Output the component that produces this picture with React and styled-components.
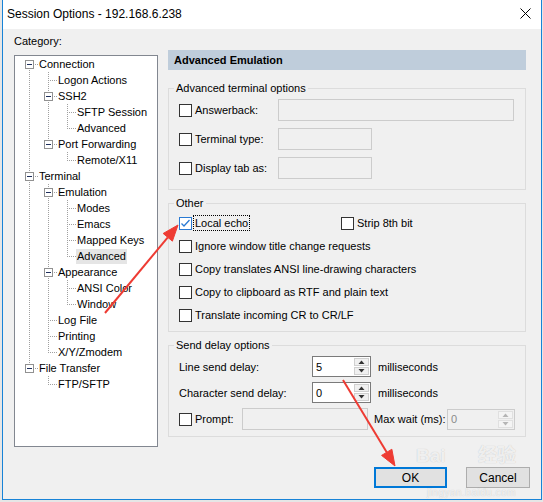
import React from "react";
import styled, { createGlobalStyle } from "styled-components";

const GlobalStyle = createGlobalStyle`
  html, body {
    margin: 0;
    background: #e6e6e6;
    font-family: "Liberation Sans", Arial, sans-serif;
    color: #000;
  }
  * { box-sizing: border-box; }
`;

const TREE = [
  {
    label: "Connection",
    children: [
      { label: "Logon Actions" },
      { label: "SSH2", children: [{ label: "SFTP Session" }, { label: "Advanced" }] },
      { label: "Port Forwarding", children: [{ label: "Remote/X11" }] },
    ],
  },
  {
    label: "Terminal",
    children: [
      {
        label: "Emulation",
        children: [
          { label: "Modes" },
          { label: "Emacs" },
          { label: "Mapped Keys" },
          { label: "Advanced", selected: true },
        ],
      },
      { label: "Appearance", children: [{ label: "ANSI Color" }, { label: "Window" }] },
      { label: "Log File" },
      { label: "Printing" },
      { label: "X/Y/Zmodem" },
    ],
  },
  { label: "File Transfer", children: [{ label: "FTP/SFTP" }] },
];

const flatten = (nodes, level = 0, guides = []) =>
  nodes.flatMap((n, i) => {
    const last = i === nodes.length - 1;
    const row = {
      label: n.label,
      selected: n.selected,
      level,
      guides,
      last,
      first: level === 0 && i === 0,
      expander: !!n.children,
    };
    return [row, ...(n.children ? flatten(n.children, level + 1, [...guides, !last]) : [])];
  });

const ROWS = flatten(TREE);

const Screen = styled.div`
  position: relative;
  width: 543px;
  height: 502px;
  padding-left: 2px;
`;

const Window = styled.div`
  width: 540px;
  height: 500px;
  border: 1px solid #1883d7;
  border-top: none;
  background: #f0f0f0;
  display: flex;
  flex-direction: column;
`;

const TitleBar = styled.div`
  height: 29px;
  flex: none;
  background: #fff;
  display: flex;
  align-items: center;
  justify-content: space-between;
  padding: 0 10px 2px 4px;
  font-size: 12px;
`;

const Body = styled.div`
  flex: 1;
  display: flex;
  flex-direction: column;
  padding: 5px 11px 0 11px;
  font-size: 11px;
`;

const Content = styled.div`
  display: grid;
  grid-template-columns: 144px 358px;
  column-gap: 10px;
  align-items: start;
`;

const LeftCol = styled.div`
  display: flex;
  flex-direction: column;
  gap: 7px;
`;

const Caption = styled.div`
  line-height: 14px;
`;

const TreeBox = styled.div`
  height: 392px;
  background: #fff;
  border: 1px solid #828790;
  padding-left: 4px;
`;

const TreeRow = styled.div`
  display: flex;
  align-items: center;
  height: 16px;
`;

const TreeLabel = styled.span`
  padding: 0 1px;
  line-height: 15px;
  white-space: nowrap;
  background: ${(p) => (p.$selected ? "#e5e5e5" : "transparent")};
`;

const RightCol = styled.div`
  margin-top: 16px;
  display: flex;
  flex-direction: column;
`;

const PanelHeader = styled.div`
  height: 20px;
  background: #bfcddb;
  font-weight: bold;
  padding-left: 6px;
  display: flex;
  align-items: center;
`;

const Group = styled.fieldset`
  margin: ${(p) => (p.$first ? "11px" : "6px")} 0 0;
  min-width: 0;
  border: 1px solid #dcdcdc;
  padding: ${(p) => p.$pad || "4px 10px 10px"};
`;

const Legend = styled.legend`
  padding: 0 2px;
  margin-left: -5px;
  line-height: 14px;
`;

const FieldGrid = styled.div`
  display: grid;
  grid-template-columns: ${(p) => p.$cols};
  grid-auto-rows: ${(p) => p.$row || "22px"};
  row-gap: ${(p) => p.$gap || "7px"};
  align-items: center;
`;

const Stack = styled.div`
  display: flex;
  flex-direction: column;
  gap: ${(p) => p.$gap || "7px"};
`;

const Line = styled.div`
  display: flex;
  align-items: center;
  height: ${(p) => p.$h || "16px"};
  gap: ${(p) => p.$gap || "0"};
`;

const CheckField = styled.label`
  display: flex;
  align-items: center;
  gap: 3px;
  white-space: nowrap;
  width: ${(p) => p.$w || "auto"};
`;

const Box = styled.span`
  width: 13px;
  height: 13px;
  flex: none;
  background: #fff;
  border: 1px solid ${(p) => (p.$checked ? "#2a7ad3" : "#333")};
  display: flex;
  align-items: center;
  justify-content: center;
`;

const FocusText = styled.span`
  outline: 1px dotted #000;
  padding: 0 1px;
  line-height: 14px;
  margin-left: -1px;
`;

const TextInput = styled.div`
  width: ${(p) => p.$w};
  height: 22px;
  border: 1px solid #cccccc;
  background: #f0f0f0;
`;

const FieldLabel = styled.span`
  width: ${(p) => p.$w || "auto"};
  margin-left: ${(p) => p.$ml || "0"};
  flex: none;
  white-space: nowrap;
`;

const SpinBox = styled.div`
  width: ${(p) => p.$w};
  height: 21px;
  flex: none;
  border: 1px solid ${(p) => (p.$disabled ? "#cccccc" : "#7a7a7a")};
  background: ${(p) => (p.$disabled ? "#f0f0f0" : "#fff")};
  color: ${(p) => (p.$disabled ? "#8a8a8a" : "#000")};
  display: flex;
  align-items: center;
  padding-left: 3px;
`;

const SpinValue = styled.span`
  flex: 1;
`;

const SpinButtons = styled.div`
  width: 16px;
  height: 19px;
  display: flex;
  flex-direction: column;
  gap: 1px;
  padding: 1px 1px 1px 0;
`;

const SpinButton = styled.div`
  flex: 1;
  border: 1px solid ${(p) => (p.$disabled ? "#e0e0e0" : "#d0d0d0")};
  background: ${(p) => (p.$disabled ? "#f4f4f4" : "#f0f0f0")};
  display: flex;
  align-items: center;
  justify-content: center;
`;

const Footer = styled.div`
  margin-top: 20px;
  display: flex;
  justify-content: flex-end;
  gap: 19px;
`;

const Button = styled.div`
  width: ${(p) => p.$w};
  height: 21px;
  background: #e1e1e1;
  border: ${(p) => (p.$default ? "2px solid #0078d7" : "1px solid #adadad")};
  display: flex;
  align-items: center;
  justify-content: center;
  font-size: 12px;
`;

const Overlay = styled.svg`
  position: absolute;
  left: 0;
  top: 0;
  pointer-events: none;
`;

/* faint baidu watermark, lies over the dialog */
const Watermark = styled.div`
  position: absolute;
  left: 404px;
  top: 446px;
  width: 112px;
  color: rgba(255, 255, 255, 0.75);
  text-shadow: 0 0 1px rgba(0, 0, 0, 0.22);
  font-family: "Liberation Sans", "Noto Sans CJK SC", sans-serif;
  pointer-events: none;
  display: flex;
  flex-direction: column;
  gap: 23px;
  line-height: 1;
`;

const WatermarkMain = styled.div`
  display: flex;
  justify-content: space-between;
  align-items: flex-end;
  padding-left: 12px;
  font-size: 19px;
  font-weight: bold;
`;

const WatermarkSub = styled.div`
  font-size: 10px;
  text-align: right;
  letter-spacing: 0.5px;
`;

const Guide = ({ on }) => (
  <svg width="19" height="16" style={{ flex: "none" }}>
    {on && <line x1="10.5" y1="0" x2="10.5" y2="16" stroke="#a0a0a0" strokeDasharray="1 1" />}
  </svg>
);

const Connector = ({ first, last, expander }) => (
  <svg width="19" height="16" style={{ flex: "none" }}>
    <g stroke="#a0a0a0" strokeDasharray="1 1">
      <line x1="10.5" y1={first ? 8 : 0} x2="10.5" y2={last ? 9 : 16} />
      <line x1="10" y1="8.5" x2="19" y2="8.5" />
    </g>
    {expander && (
      <>
        <rect x="6.5" y="4.5" width="8" height="8" fill="#fff" stroke="#919191" />
        <line x1="8" y1="8.5" x2="13" y2="8.5" stroke="#1e2f5c" />
      </>
    )}
  </svg>
);

const Check = ({ checked }) => (
  <Box $checked={checked}>
    {checked && (
      <svg width="11" height="11" viewBox="0 0 11 11">
        <path d="M1.5 5.5 L4 8 L9.5 2" fill="none" stroke="#2a7ad3" strokeWidth="1.3" />
      </svg>
    )}
  </Box>
);

const Arrow = ({ up, disabled }) => (
  <svg width="7" height="4" viewBox="0 0 7 4">
    <path
      d={up ? "M0.5 4 L3.5 0.5 L6.5 4 Z" : "M0.5 0 L3.5 3.5 L6.5 0 Z"}
      fill={disabled ? "#b5b5b5" : "#333"}
    />
  </svg>
);

const Spin = ({ value, w, disabled }) => (
  <SpinBox $w={w} $disabled={disabled}>
    <SpinValue>{value}</SpinValue>
    <SpinButtons>
      <SpinButton $disabled={disabled}>
        <Arrow up disabled={disabled} />
      </SpinButton>
      <SpinButton $disabled={disabled}>
        <Arrow disabled={disabled} />
      </SpinButton>
    </SpinButtons>
  </SpinBox>
);

const arrowShape = (x1, y1, x2, y2, len = 16, half = 6) => {
  const dx = x2 - x1;
  const dy = y2 - y1;
  const d = Math.hypot(dx, dy);
  const ux = dx / d;
  const uy = dy / d;
  const bx = x2 - ux * len;
  const by = y2 - uy * len;
  return {
    line: `M${x1} ${y1} L${bx} ${by}`,
    head: `M${x2} ${y2} L${bx - uy * half} ${by + ux * half} L${bx + uy * half} ${by - ux * half} Z`,
  };
};

const ARROWS = [arrowShape(105, 313, 178, 225), arrowShape(343, 380, 395, 466)];

export default function App() {
  return (
    <Screen>
      <GlobalStyle />
      <Window>
        <TitleBar>
          <span>Session Options - 192.168.6.238</span>
          <svg width="11" height="11" viewBox="0 0 11 11">
            <path d="M0.5 0.5 L10.5 10.5 M10.5 0.5 L0.5 10.5" stroke="#000" strokeWidth="1" />
          </svg>
        </TitleBar>
        <Body>
          <Content>
            <LeftCol>
              <Caption>Category:</Caption>
              <TreeBox>
                {ROWS.map((r, i) => (
                  <TreeRow key={i}>
                    {r.guides.map((g, j) => (
                      <Guide key={j} on={g} />
                    ))}
                    <Connector first={r.first} last={r.last} expander={r.expander} />
                    <TreeLabel $selected={r.selected}>{r.label}</TreeLabel>
                  </TreeRow>
                ))}
              </TreeBox>
            </LeftCol>

            <RightCol>
              <PanelHeader>Advanced Emulation</PanelHeader>

              <Group $first>
                <Legend>Advanced terminal options</Legend>
                <FieldGrid $cols="99px auto">
                  <CheckField>
                    <Check />
                    Answerback:
                  </CheckField>
                  <TextInput $w="236px" />
                  <CheckField>
                    <Check />
                    Terminal type:
                  </CheckField>
                  <TextInput $w="94px" />
                  <CheckField>
                    <Check />
                    Display tab as:
                  </CheckField>
                  <TextInput $w="94px" />
                </FieldGrid>
              </Group>

              <Group $pad="5px 10px 8px">
                <Legend>Other</Legend>
                <Stack>
                  <Line>
                    <CheckField $w="162px">
                      <Check checked />
                      <FocusText>Local echo</FocusText>
                    </CheckField>
                    <CheckField>
                      <Check />
                      Strip 8th bit
                    </CheckField>
                  </Line>
                  <Line>
                    <CheckField>
                      <Check />
                      Ignore window title change requests
                    </CheckField>
                  </Line>
                  <Line>
                    <CheckField>
                      <Check />
                      Copy translates ANSI line-drawing characters
                    </CheckField>
                  </Line>
                  <Line>
                    <CheckField>
                      <Check />
                      Copy to clipboard as RTF and plain text
                    </CheckField>
                  </Line>
                  <Line>
                    <CheckField>
                      <Check />
                      Translate incoming CR to CR/LF
                    </CheckField>
                  </Line>
                </Stack>
              </Group>

              <Group $pad="4px 10px 6px">
                <Legend>Send delay options</Legend>
                <Stack $gap="5px">
                  <Line $h="21px">
                    <FieldLabel $w="133px">Line send delay:</FieldLabel>
                    <Spin value="5" w="59px" />
                    <FieldLabel $ml="7px">milliseconds</FieldLabel>
                  </Line>
                  <Line $h="21px">
                    <FieldLabel $w="133px">Character send delay:</FieldLabel>
                    <Spin value="0" w="59px" />
                    <FieldLabel $ml="7px">milliseconds</FieldLabel>
                  </Line>
                  <Line $h="22px">
                    <CheckField $w="64px">
                      <Check />
                      Prompt:
                    </CheckField>
                    <TextInput $w="128px" />
                    <FieldLabel $ml="6px" $w="73px">
                      Max wait (ms):
                    </FieldLabel>
                    <Spin value="0" w="68px" disabled />
                  </Line>
                </Stack>
              </Group>
            </RightCol>
          </Content>

          <Footer>
            <Button $w="73px" $default>
              OK
            </Button>
            <Button $w="64px">Cancel</Button>
          </Footer>
        </Body>
      </Window>

      <Watermark>
        <WatermarkMain>
          <span>Bai</span>
          <span>经验</span>
        </WatermarkMain>
        <WatermarkSub>jingyan.baidu.com</WatermarkSub>
      </Watermark>

      <Overlay width="543" height="502">
        {ARROWS.map((a, i) => (
          <g key={i} fill="#ee3b33" stroke="#ee3b33">
            <path d={a.line} strokeWidth="2" fill="none" />
            <path d={a.head} strokeWidth="1" />
          </g>
        ))}
      </Overlay>
    </Screen>
  );
}
